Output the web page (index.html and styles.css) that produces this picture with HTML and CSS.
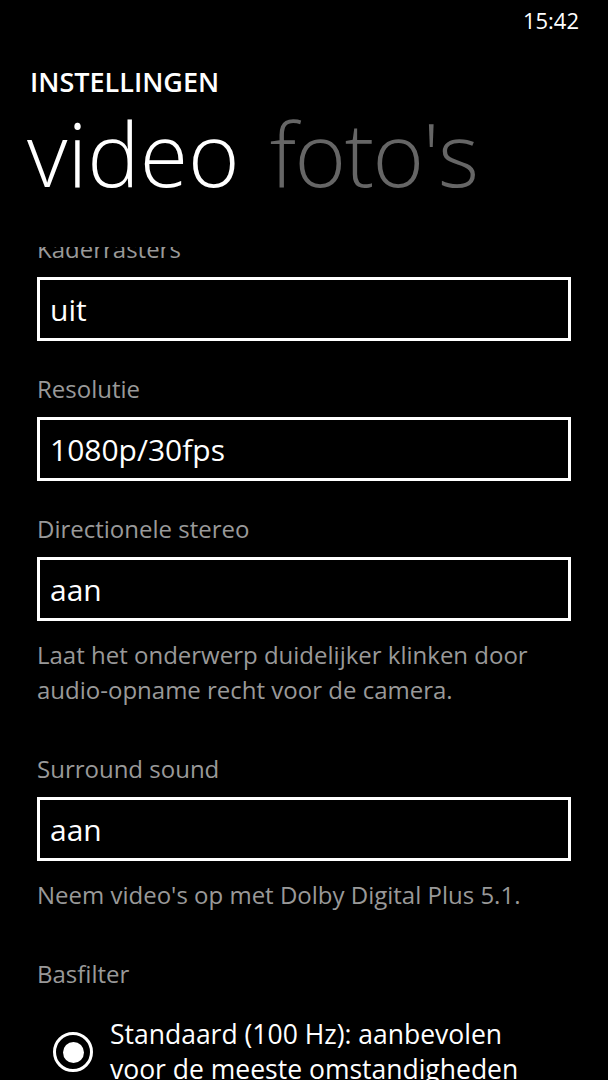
FILE: index.html
```html
<!DOCTYPE html>
<html lang="nl">
<head>
<meta charset="utf-8">
<title>Instellingen</title>
<link rel="stylesheet" href="styles.css">
</head>
<body>
<div class="phone">
  <div class="status"><span class="time">15:42</span></div>
  <div class="header">
    <div class="app-title">INSTELLINGEN</div>
    <div class="pivot"><span class="pivot-item active">video</span><span class="pivot-item">foto's</span></div>
  </div>
  <div class="viewport">
    <div class="content">
      <div class="field">
        <div class="label">Kaderrasters</div>
        <div class="picker">uit</div>
      </div>
      <div class="field">
        <div class="label">Resolutie</div>
        <div class="picker">1080p/30fps</div>
      </div>
      <div class="field has-desc">
        <div class="label">Directionele stereo</div>
        <div class="picker">aan</div>
        <div class="desc">Laat het onderwerp duidelijker klinken door<br>audio-opname recht voor de camera.</div>
      </div>
      <div class="field has-desc">
        <div class="label">Surround sound</div>
        <div class="picker">aan</div>
        <div class="desc">Neem video's op met Dolby Digital Plus 5.1.</div>
      </div>
      <div class="field">
        <div class="label">Basfilter</div>
        <div class="radio">
          <span class="radio-mark"><span class="radio-dot"></span></span>
          <span class="radio-text">Standaard (100 Hz): aanbevolen<br>voor de meeste omstandigheden</span>
        </div>
      </div>
    </div>
  </div>
</div>
</body>
</html>
```
FILE: styles.css
```css
html, body {
  margin: 0;
  padding: 0;
  background: #000;
}
body {
  color: #fff;
  font-family: "Open Sans", "Noto Sans", sans-serif;
  overflow: hidden;
}
.phone {
  width: 608px;
  height: 1080px;
  overflow: hidden;
  display: flex;
  flex-direction: column;
}
.status {
  height: 40px;
  display: flex;
  justify-content: flex-end;
  padding-right: 29px;
  font-size: 22px;
  line-height: 40px;
}
.header {
  padding-left: 30px;
}
.app-title {
  margin-top: 25px;
  font-size: 27px;
  font-weight: 600;
  line-height: 34px;
}
.pivot {
  margin-top: 4px;
  font-size: 88px;
  font-weight: 300;
  line-height: 100px;
  white-space: nowrap;
  margin-left: -3px;
}
.pivot-item {
  margin-right: 30px;
  color: #666;
  letter-spacing: -1.5px;
}
.pivot-item.active {
  color: #fff;
  letter-spacing: 0;
}
.viewport {
  margin-top: 44px;
  flex: 1;
  overflow: hidden;
}
.content {
  margin-top: -14px;
  padding: 0 37px;
}
.field {
  margin-bottom: 32px;
}
.field.has-desc {
  margin-bottom: 46px;
}
.label {
  font-size: 24px;
  line-height: 32px;
  color: #999;
}
.picker {
  margin-top: 12px;
  border: 3px solid #fff;
  padding: 2px 10px 0;
  height: 56px;
  font-size: 30px;
  line-height: 56px;
}
.desc {
  margin-top: 16px;
  font-size: 24px;
  line-height: 35px;
  color: #999;
}
.radio {
  margin-top: 27px;
  display: flex;
  align-items: center;
  gap: 17px;
  padding-left: 16px;
}
.radio-mark {
  width: 34px;
  height: 34px;
  border: 3px solid #fff;
  border-radius: 50%;
  display: flex;
  align-items: center;
  justify-content: center;
  flex: none;
}
.radio-dot {
  width: 21px;
  height: 21px;
  border-radius: 50%;
  background: #fff;
}
.radio-text {
  font-size: 26.5px;
  line-height: 35px;
}
```
